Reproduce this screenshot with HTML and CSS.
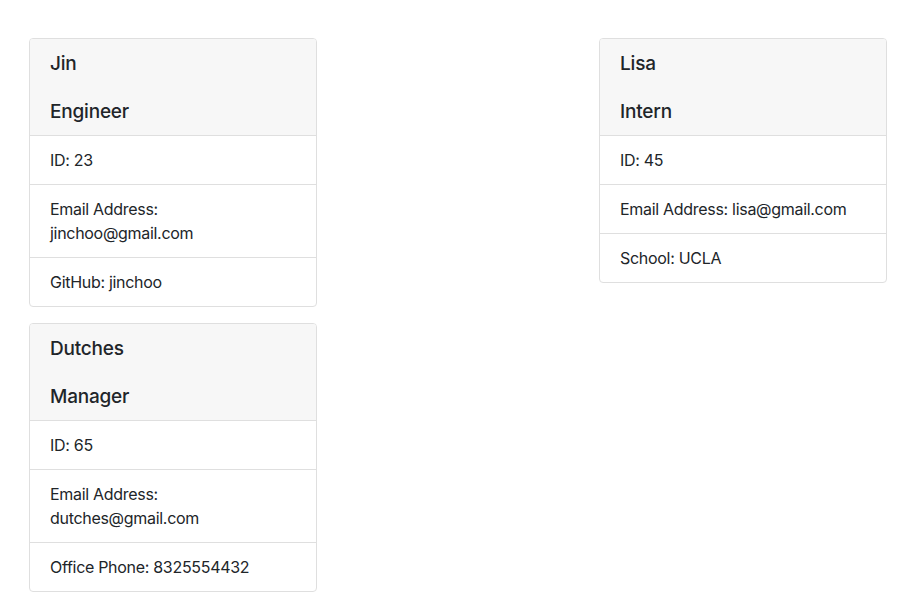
FILE: index.html
```html
<!DOCTYPE html>
<html lang="en">
<head>
<meta charset="utf-8">
<title>Team</title>
<link rel="stylesheet" href="styles.css">
</head>
<body>
<main class="page">
  <section class="column">
    <div class="card">
      <div class="card-header">
        <h5 class="title">Jin</h5>
        <h5 class="title">Engineer</h5>
      </div>
      <ul class="list">
        <li class="item">ID: 23</li>
        <li class="item">Email Address: jinchoo@gmail.com</li>
        <li class="item">GitHub: jinchoo</li>
      </ul>
    </div>
    <div class="card">
      <div class="card-header">
        <h5 class="title">Dutches</h5>
        <h5 class="title">Manager</h5>
      </div>
      <ul class="list">
        <li class="item">ID: 65</li>
        <li class="item">Email Address: dutches@gmail.com</li>
        <li class="item">Office Phone: 8325554432</li>
      </ul>
    </div>
  </section>
  <section class="column">
    <div class="card">
      <div class="card-header">
        <h5 class="title">Lisa</h5>
        <h5 class="title">Intern</h5>
      </div>
      <ul class="list">
        <li class="item">ID: 45</li>
        <li class="item">Email Address: lisa@gmail.com</li>
        <li class="item">School: UCLA</li>
      </ul>
    </div>
  </section>
</main>
</body>
</html>
```

FILE: styles.css
```css
* { box-sizing: border-box; }
html, body { margin: 0; padding: 0; background: #fff; }
body {
  font-family: "Inter", "Liberation Sans", sans-serif;
  font-size: 16px;
  line-height: 24px;
  color: #212529;
  letter-spacing: -0.3px;
}
.page {
  display: flex;
  justify-content: space-between;
  align-items: flex-start;
  padding: 38px 22px 0 29px;
}
.column {
  display: flex;
  flex-direction: column;
  gap: 16px;
}
.card {
  width: 288px;
  border: 1px solid #dfdfdf;
  border-radius: 4px;
  background: #fff;
  overflow: hidden;
}
.card-header {
  background: #f7f7f7;
  border-bottom: 1px solid #dfdfdf;
  padding: 13px 20px 11px;
  display: flex;
  flex-direction: column;
  gap: 24px;
}
.title {
  margin: 0;
  font-size: 19px;
  font-weight: 500;
  line-height: 24px;
  letter-spacing: -0.2px;
}
.list {
  list-style: none;
  margin: 0;
  padding: 0;
}
.item {
  padding: 12px 20px;
  border-bottom: 1px solid #dfdfdf;
  line-height: 24px;
}
.item:last-child { border-bottom: 0; }
```
